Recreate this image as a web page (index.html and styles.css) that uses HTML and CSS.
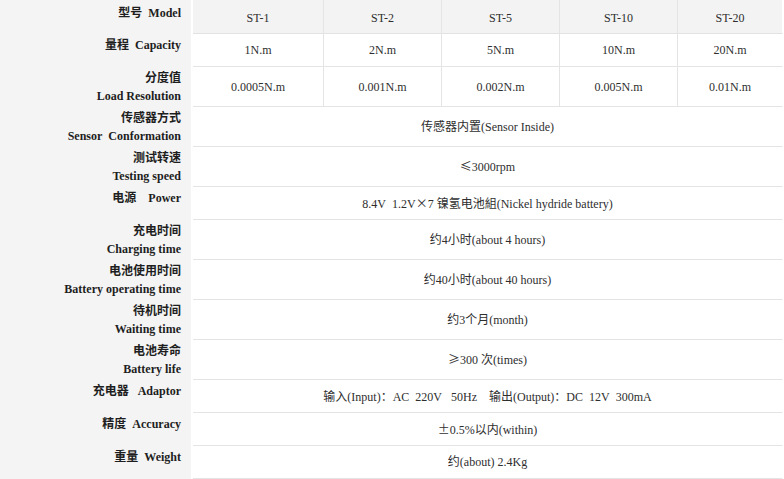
FILE: index.html
```html
<!DOCTYPE html>
<html lang="zh">
<head>
<meta charset="utf-8">
<title>ST 系列参数</title>
<link rel="stylesheet" href="styles.css">
</head>
<body>
<table class="spec">
  <colgroup>
    <col class="c-label"><col class="c1"><col class="c2"><col class="c3"><col class="c4"><col class="c5">
  </colgroup>
  <tr class="head">
    <th class="label">型号&nbsp;&nbsp;Model</th>
    <td class="cell">ST-1</td><td class="cell">ST-2</td><td class="cell">ST-5</td><td class="cell">ST-10</td><td class="cell last">ST-20</td>
  </tr>
  <tr class="one">
    <th class="label">量程&nbsp;&nbsp;Capacity</th>
    <td class="cell">1N.m</td><td class="cell">2N.m</td><td class="cell">5N.m</td><td class="cell">10N.m</td><td class="cell last">20N.m</td>
  </tr>
  <tr class="two">
    <th class="label">分度值<br>Load Resolution</th>
    <td class="cell">0.0005N.m</td><td class="cell">0.001N.m</td><td class="cell">0.002N.m</td><td class="cell">0.005N.m</td><td class="cell last">0.01N.m</td>
  </tr>
  <tr class="two">
    <th class="label">传感器方式<br>Sensor&nbsp;&nbsp;Conformation</th>
    <td class="cell last" colspan="5">传感器内置(Sensor Inside)</td>
  </tr>
  <tr class="two">
    <th class="label">测试转速<br>Testing speed</th>
    <td class="cell last" colspan="5"><span class="cjk">≤</span>3000rpm</td>
  </tr>
  <tr class="one">
    <th class="label">电源&nbsp;&nbsp;&nbsp;&nbsp;Power</th>
    <td class="cell last" colspan="5">8.4V&nbsp;&nbsp;1.2V<span class="cjk">×</span>7 镍氢电池組(Nickel hydride battery)</td>
  </tr>
  <tr class="two">
    <th class="label">充电时间<br>Charging time</th>
    <td class="cell last" colspan="5">约4小时(about 4 hours)</td>
  </tr>
  <tr class="two">
    <th class="label">电池使用时间<br>Battery operating time</th>
    <td class="cell last" colspan="5">约40小时(about 40 hours)</td>
  </tr>
  <tr class="two">
    <th class="label">待机时间<br>Waiting time</th>
    <td class="cell last" colspan="5">约3个月(month)</td>
  </tr>
  <tr class="two">
    <th class="label">电池寿命<br>Battery life</th>
    <td class="cell last" colspan="5"><span class="cjk">≥</span>300 次(times)</td>
  </tr>
  <tr class="one">
    <th class="label">充电器&nbsp;&nbsp;&nbsp;Adaptor</th>
    <td class="cell last" colspan="5">输入(Input)<span class="cjk">：</span>AC&nbsp;&nbsp;220V&nbsp;&nbsp;&nbsp;50Hz&nbsp;&nbsp;&nbsp;&nbsp;输出(Output)<span class="cjk">：</span>DC&nbsp;&nbsp;12V&nbsp;&nbsp;300mA</td>
  </tr>
  <tr class="one">
    <th class="label">精度&nbsp;&nbsp;Accuracy</th>
    <td class="cell last" colspan="5"><span class="cjk">±</span>0.5%以内(within)</td>
  </tr>
  <tr class="one">
    <th class="label">重量&nbsp;&nbsp;Weight</th>
    <td class="cell last" colspan="5">约(about) 2.4Kg</td>
  </tr>
</table>
</body>
</html>
```
FILE: styles.css
```css
html, body {
  margin: 0;
  padding: 0;
  background: #ffffff;
}

.spec {
  border-collapse: separate;
  border-spacing: 0;
  table-layout: fixed;
  width: 783px;
  font-family: "Liberation Serif", "Noto Sans CJK SC", serif;
  font-size: 12px;
  color: #2e2e2e;
}

.c-label { width: 193px; }
.c1 { width: 131px; }
.c2 { width: 118px; }
.c3 { width: 118px; }
.c4 { width: 118px; }
.c5 { width: 105px; }

.spec tr.head { height: 34px; }
.spec tr.one { height: 33px; }
.spec tr.two { height: 40px; }

.label {
  background: #f4f4f4;
  border-right: 2px solid #ffffff;
  text-align: right;
  vertical-align: top;
  padding: 2px 10px 0 0;
  line-height: 18px;
  font-weight: bold;
  color: #1e1e1e;
  white-space: nowrap;
}

.head .label {
  padding-top: 4px;
}

.cell {
  text-align: center;
  vertical-align: middle;
  padding: 0;
  line-height: 18px;
  border-bottom: 1px solid #e4e4e4;
  border-right: 1px solid #e4e4e4;
  white-space: nowrap;
}

.head .cell {
  background: #f3f3f3;
  border-bottom: 1px solid #e2e2e2;
  padding-top: 2px;
}

.cell.last {
  border-right: 1px solid #ffffff;
}

.cjk {
  font-family: "Noto Sans CJK SC", sans-serif;
  line-height: 18px;
}
```
